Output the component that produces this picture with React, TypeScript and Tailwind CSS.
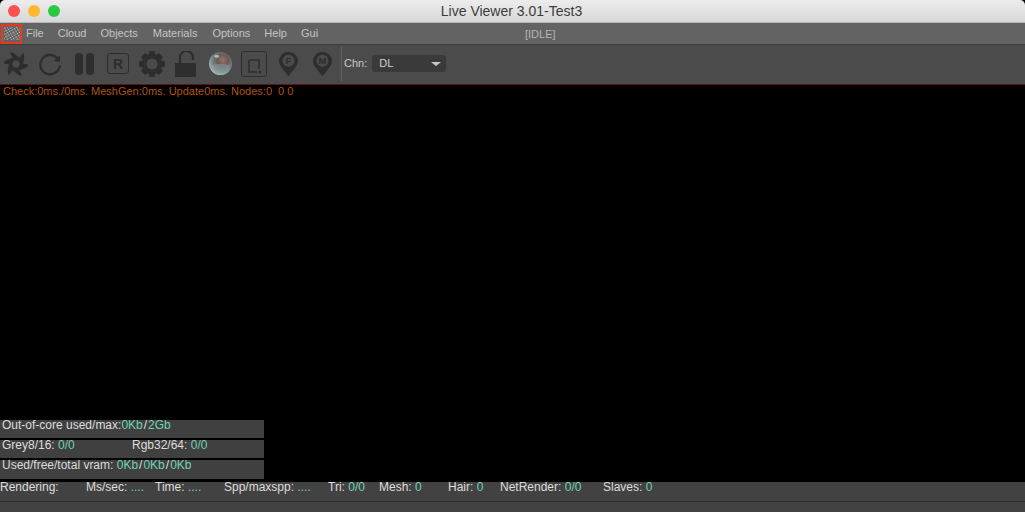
const Dots = () => (
  <svg width="16" height="13" viewBox="0 0 16 13">
    <defs>
      <pattern id="chk" width="2" height="2" patternUnits="userSpaceOnUse" patternTransform="rotate(-30)">
        <rect width="2" height="2" fill="#3c3c3c" />
        <rect width="1" height="1" fill="#d4d4d4" />
        <rect x="1" y="1" width="1" height="1" fill="#909090" />
      </pattern>
    </defs>
    <rect width="16" height="13" fill="url(#chk)" />
  </svg>
);

const C = "#2e2e2e";

const Octane = () => (
  <svg width="24" height="26" viewBox="-13 -13 26 26" fill={C}>
    {[0, 60, 120, 180, 240, 300].map((a) => (
      <path key={a} transform={`rotate(${a})`} d="M-2.8 -3.6 L-6.5 -13 L-2 -11.5 L4 -6.6 L2.6 -4 Z" />
    ))}
  </svg>
);

const Reload = () => (
  <svg width="22" height="24" viewBox="0 0 22 24" fill="none" stroke={C} strokeWidth="2.4">
    <path d="M18.5 6.5 A9.7 9.7 0 1 0 20.7 13.5" />
    <path d="M21 3.5 L21 10 L14.5 9 Z" fill={C} stroke="none" />
  </svg>
);

const Pause = () => (
  <div className="flex gap-[3px]">
    <div className="w-[8px] h-[22px] rounded-[4px] bg-[#2e2e2e]" />
    <div className="w-[8px] h-[22px] rounded-[4px] bg-[#2e2e2e]" />
  </div>
);

const RBox = () => (
  <div className="w-[22px] h-[21px] rounded-[3px] border-[1.5px] border-[#2e2e2e] flex items-center justify-center text-[14px] font-bold leading-none text-[#2e2e2e]">
    R
  </div>
);

const Gear = () => (
  <svg width="26" height="26" viewBox="0 0 26 26" fill={C}>
    <path
      fillRule="evenodd"
      d="M10.5 0 h5 l1 4 l3.5 -2 l4 4 l-2 3.5 l4 1 v5 l-4 1 l2 3.5 l-4 4 l-3.5 -2 l-1 4 h-5 l-1 -4 l-3.5 2 l-4 -4 l2 -3.5 l-4 -1 v-5 l4 -1 l-2 -3.5 l4 -4 l3.5 2 Z M13 7.5 a5.5 5.5 0 1 0 0.1 0 Z"
    />
  </svg>
);

const Lock = () => (
  <svg width="21" height="26" viewBox="0 0 21 26" fill="none">
    <path d="M5 12 V6.5 a6.3 6.3 0 0 1 13 0 V9" stroke={C} strokeWidth="2.2" />
    <rect x="0" y="12" width="21" height="14" fill={C} />
  </svg>
);

const Sphere = () => (
  <svg width="23" height="23" viewBox="0 0 24 24">
    <defs>
      <radialGradient id="sph" cx="0.6" cy="0.35" r="0.7">
        <stop offset="0" stopColor="#9a7466" />
        <stop offset="0.35" stopColor="#6a5a58" />
        <stop offset="0.65" stopColor="#6f8284" />
        <stop offset="1" stopColor="#b4c2c2" />
      </radialGradient>
    </defs>
    <circle cx="12" cy="12" r="12" fill="url(#sph)" />
    <path d="M2 14 Q12 11 22 14 Q20 22 12 23 Q4 22 2 14 Z" fill="#8a9fa2" opacity="0.55" />
    <ellipse cx="8" cy="4.5" rx="2.5" ry="1.5" fill="#dcdcdc" opacity="0.7" />
  </svg>
);

const Region = () => (
  <div className="w-[26px] h-[26px] rounded-[3px] border-[1.5px] border-[#2e2e2e] flex items-center justify-center">
    <svg width="14" height="16" viewBox="0 0 14 16" fill="none" className="mt-[4px] ml-[2px]">
      <path d="M1 2 H11 V11 M9 14 H1 V2" stroke={C} strokeWidth="1.5" />
      <circle cx="12" cy="14" r="1.5" fill={C} />
    </svg>
  </div>
);

const Pin = ({ l }: { l: string }) => (
  <svg width="19" height="26" viewBox="0 0 20 26">
    <path d="M10 0 a10 10 0 0 1 10 10 C20 15 13 21 10 26 C7 21 0 15 0 10 A10 10 0 0 1 10 0 Z" fill={C} />
    <circle cx="10" cy="9.5" r="6.3" fill="#4b4b4b" />
    <text x="10" y="13" textAnchor="middle" fontSize="10" fontWeight="700" fill={C} fontFamily="Liberation Sans, sans-serif">
      {l}
    </text>
  </svg>
);

const V = ({ children }: { children: React.ReactNode }) => <span className="text-[#6fd3b5]">{children}</span>;
const S = () => <span className="mx-[1px]">/</span>;

const menu: [string, string][] = [
  ["File", "ml-[4px]"],
  ["Cloud", "ml-[14px]"],
  ["Objects", "ml-[14px]"],
  ["Materials", "ml-[15px]"],
  ["Options", "ml-[15px]"],
  ["Help", "ml-[14px]"],
  ["Gui", "ml-[14px]"],
];

export default function App() {
  return (
    <div className="w-[1025px] h-[512px] overflow-hidden flex flex-col bg-black text-[12px] font-['Liberation_Sans',Arial,sans-serif]">
      {/* title bar */}
      <div className="relative h-[23px] shrink-0 flex items-center bg-gradient-to-b from-[#ececec] to-[#d8d8d8] rounded-t-[5px] border-b border-[#b5b5b5]">
        <div className="flex gap-[8px] pl-[8px]">
          <div className="w-[12px] h-[12px] rounded-full bg-[#f9534f]" />
          <div className="w-[12px] h-[12px] rounded-full bg-[#fdb82e]" />
          <div className="w-[12px] h-[12px] rounded-full bg-[#2ac941]" />
        </div>
        <div className="absolute inset-0 pr-[2px] flex items-center justify-center text-[14px] text-[#3c3c3c]">
          Live Viewer 3.01-Test3
        </div>
      </div>

      {/* menu bar */}
      <div className="relative h-[22px] shrink-0 flex items-center bg-[#636363] border-b border-[#3d3d3d] text-[#c4c4c4] text-[11px]">
        <div className="ml-[1px] w-[21px] h-[20px] border-2 border-[#e8391f] flex items-center justify-center">
          <Dots />
        </div>
        {menu.map(([t, c]) => (
          <span key={t} className={c}>
            {t}
          </span>
        ))}
        <span className="absolute left-[525px] top-[3px] text-[#b5b5b5] text-[11px]">[IDLE]</span>
      </div>

      {/* toolbar */}
      <div className="h-[40px] shrink-0 flex items-center bg-[#4b4b4b] border-b border-[#5c1512] pl-[4px] pb-[2px]">
        <Octane />
        <div className="ml-[11px]"><Reload /></div>
        <div className="ml-[14px]"><Pause /></div>
        <div className="ml-[13px]"><RBox /></div>
        <div className="ml-[10px]"><Gear /></div>
        <div className="ml-[10px]"><Lock /></div>
        <div className="ml-[13px]"><Sphere /></div>
        <div className="ml-[9px]"><Region /></div>
        <div className="ml-[12px]"><Pin l="F" /></div>
        <div className="ml-[15px]"><Pin l="M" /></div>
        <div className="ml-[9px] w-px h-[34px] bg-[#666666]" />
        <span className="ml-[2px] text-[#c8c8c8] text-[11px]">Chn:</span>
        <div className="ml-[5px] w-[74px] h-[17px] rounded-[3px] bg-[#3a3a3a] flex items-center justify-between pl-[7px] pr-[5px] text-[#d0d0d0] text-[11px]">
          <span>DL</span>
          <span className="w-0 h-0 border-l-[5px] border-r-[5px] border-t-[4px] border-l-transparent border-r-transparent border-t-[#c8c8c8]" />
        </div>
      </div>

      {/* viewport */}
      <div className="flex-1 flex flex-col justify-between bg-black">
        <div className="pl-[3px] text-[#b4530f] leading-[13px] text-[11px]">
          Check:0ms./0ms. MeshGen:0ms. Update0ms. Nodes:0&nbsp; 0 0
        </div>
        <div className="w-[264px] flex flex-col gap-[2px] pb-[3px] text-[#dcdcdc]">
          <div className="h-[18px] bg-[#404040] pl-[2px] leading-[11px]">
            Out-of-core used/max:<V>0Kb</V><S /><V>2Gb</V>
          </div>
          <div className="h-[18px] bg-[#404040] pl-[2px] leading-[11px] flex">
            <span className="w-[130px]">
              Grey8/16: <V>0/0</V>
            </span>
            <span>
              Rgb32/64: <V>0/0</V>
            </span>
          </div>
          <div className="h-[19px] bg-[#404040] pl-[2px] leading-[11px]">
            Used/free/total vram: <V>0Kb</V><S /><V>0Kb</V><S /><V>0Kb</V>
          </div>
        </div>
      </div>

      {/* status */}
      <div className="h-[20px] shrink-0 flex items-start leading-[11px] bg-[#424242] border-b border-[#2e2e2e] text-[#dcdcdc]">
        <span className="w-[86px]">Rendering:</span>
        <span className="w-[69px]">Ms/sec: <V>....</V></span>
        <span className="w-[69px]">Time: <V>....</V></span>
        <span className="w-[104px]">Spp/maxspp: <V>....</V></span>
        <span className="w-[51px]">Tri: <V>0/0</V></span>
        <span className="w-[69px]">Mesh: <V>0</V></span>
        <span className="w-[52px]">Hair: <V>0</V></span>
        <span className="w-[103px]">NetRender: <V>0/0</V></span>
        <span>Slaves: <V>0</V></span>
      </div>
      <div className="h-[10px] shrink-0 bg-[#424242]" />
    </div>
  );
}
